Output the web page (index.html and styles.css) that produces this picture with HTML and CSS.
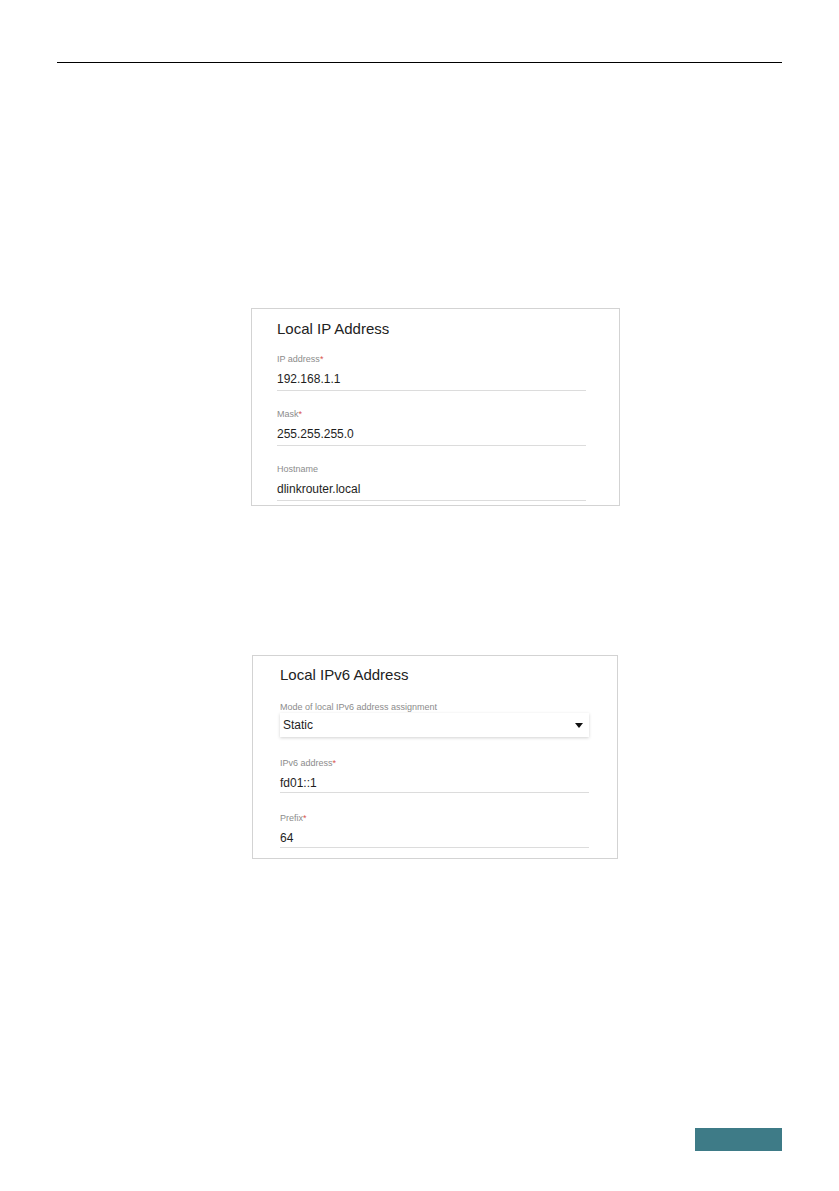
FILE: index.html
```html
<!DOCTYPE html>
<html lang="en">
<head>
<meta charset="utf-8">
<title>Local IP Address</title>
<link rel="stylesheet" href="styles.css">
</head>
<body>
<div class="page">
  <div class="rule"></div>

  <section class="card card-ipv4">
    <h2 class="card-title">Local IP Address</h2>
    <div class="field">
      <div class="label">IP address<span class="req">*</span></div>
      <div class="value">192.168.1.1</div>
    </div>
    <div class="field">
      <div class="label">Mask<span class="req">*</span></div>
      <div class="value">255.255.255.0</div>
    </div>
    <div class="field">
      <div class="label">Hostname</div>
      <div class="value">dlinkrouter.local</div>
    </div>
  </section>

  <section class="card card-ipv6">
    <h2 class="card-title">Local IPv6 Address</h2>
    <div class="select-field">
      <div class="label">Mode of local IPv6 address assignment</div>
      <div class="select">
        <span class="select-value">Static</span>
        <svg class="caret" width="8" height="5" viewBox="0 0 8 5"><path d="M0 0H8L4 5Z" fill="#111"/></svg>
      </div>
    </div>
    <div class="field">
      <div class="label">IPv6 address<span class="req">*</span></div>
      <div class="value">fd01::1</div>
    </div>
    <div class="field">
      <div class="label">Prefix<span class="req">*</span></div>
      <div class="value">64</div>
    </div>
  </section>

  <div class="footer">
    <div class="page-tab"></div>
  </div>
</div>
</body>
</html>
```

FILE: styles.css
```css
html, body {
  margin: 0;
  padding: 0;
  background: #ffffff;
}

body {
  font-family: "Liberation Sans", Arial, sans-serif;
  color: #222;
}

.page {
  width: 725px;
  margin-left: 57px;
  padding-top: 62px;
}

.rule {
  height: 0;
  border-top: 1px solid #000;
}

.card {
  box-sizing: border-box;
  border: 1px solid #d3d3d3;
  background: #fff;
}

.card-ipv4 {
  margin-top: 245px;
  margin-left: 194px;
  width: 369px;
  padding: 10px 33px 4px 25px;
}

.card-ipv6 {
  margin-top: 149px;
  margin-left: 195px;
  width: 366px;
  padding: 9px 28px 10px 27px;
}

.card-title {
  margin: 0;
  font-size: 15px;
  line-height: 20px;
  font-weight: normal;
  color: #222;
}

.field {
  margin-top: 17px;
  border-bottom: 1px solid #dcdcdc;
  padding-bottom: 2px;
}

.card-title + .field {
  margin-top: 14px;
}

.card-ipv6 .field {
  margin-top: 19px;
  padding-bottom: 0;
}

.card-ipv6 .select-field + .field {
  margin-top: 20px;
}

.label {
  font-size: 9px;
  line-height: 12px;
  color: #8c8c8c;
}

.req {
  color: #d9534f;
}

.value {
  margin-top: 5px;
  font-size: 12px;
  line-height: 18px;
  color: #1e1e1e;
}

.select-field {
  margin-top: 16px;
}

.select {
  height: 24px;
  display: flex;
  align-items: center;
  justify-content: space-between;
  padding: 0 6px 0 3px;
  box-shadow: 0 1px 3px rgba(0, 0, 0, 0.18);
  background: #fff;
}

.select-value {
  font-size: 12px;
  line-height: 18px;
  color: #1e1e1e;
}

.caret {
  display: block;
}

.footer {
  margin-top: 269px;
  display: flex;
  justify-content: flex-end;
}

.page-tab {
  width: 87px;
  height: 23px;
  background: #3e7b87;
}
```
